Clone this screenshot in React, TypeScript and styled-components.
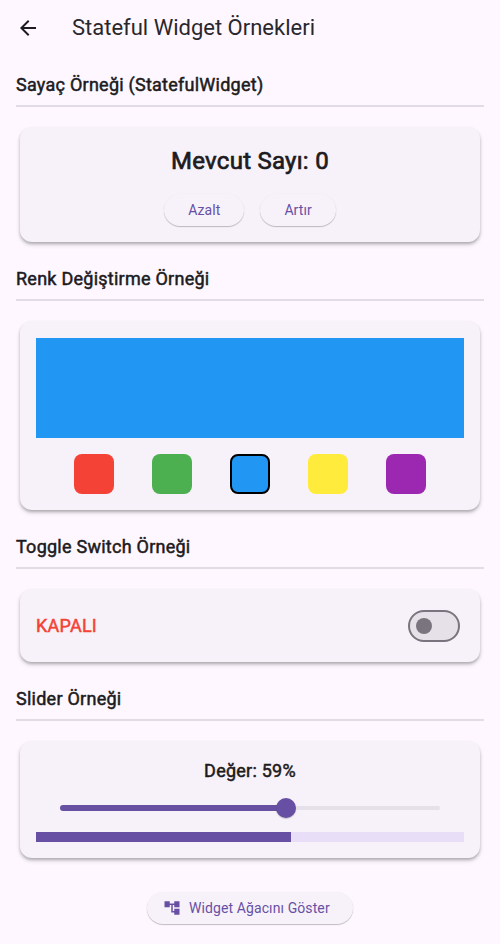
import React, { useState } from 'react';
import styled, { createGlobalStyle } from 'styled-components';

const GlobalStyle = createGlobalStyle`
  * { box-sizing: border-box; }
  body {
    margin: 0;
    background: #fef7ff;
    color: #1d1b20;
    font-family: Roboto, sans-serif;
  }
  button { font-family: inherit; cursor: pointer; }
`;

const Page = styled.div`
  height: 944px;
  display: flex;
  flex-direction: column;
  overflow: hidden;
`;

const AppBar = styled.header`
  height: 56px;
  flex: none;
  display: flex;
  align-items: center;
  padding-left: 16px;
  gap: 32px;
`;

const BackButton = styled.button`
  display: flex;
  padding: 0;
  border: 0;
  background: none;
  color: #1d1b20;
`;

const AppTitle = styled.h1`
  margin: 0;
  color: #29272c;
  font-size: 22px;
  line-height: 28px;
  font-weight: 400;
`;

const Content = styled.main`
  display: flex;
  flex-direction: column;
  padding: 16px;
`;

const SectionTitle = styled.h2`
  margin: 0;
  font-size: 18px;
  line-height: 26px;
  font-weight: 400;
  letter-spacing: 0.25px;
  -webkit-text-stroke: 0.5px currentColor;
`;

const Divider = styled.hr`
  width: 100%;
  height: 2px;
  margin: 7px 0 20px;
  border: 0;
  background: #e2dce6;
`;

const Card = styled.section<{ $height: number }>`
  height: ${(p) => p.$height}px;
  margin: 0 4px 24px;
  padding: 17px 16px 16px;
  border-radius: 12px;
  background: #f7f2fa;
  box-shadow: 0 2px 3px rgba(0, 0, 0, 0.24), 0 3px 5px rgba(0, 0, 0, 0.1);
`;

const CounterText = styled.p`
  margin: 0 0 16px;
  font-size: 24px;
  line-height: 34px;
  font-weight: 400;
  letter-spacing: 0.25px;
  -webkit-text-stroke: 0.7px currentColor;
  text-align: center;
`;

const ButtonRow = styled.div`
  display: flex;
  justify-content: center;
  gap: 16px;
`;

const PillButton = styled.button<{ $width: number; $icon?: boolean }>`
  width: ${(p) => p.$width}px;
  height: 32px;
  display: flex;
  align-items: center;
  justify-content: ${(p) => (p.$icon ? 'flex-start' : 'center')};
  gap: 8px;
  padding: 0 0 0 ${(p) => (p.$icon ? 16 : 0)}px;
  border: 0;
  border-radius: 16px;
  background: #f7f2fa;
  color: #6750a4;
  font-size: 14px;
  font-weight: 400;
  letter-spacing: 0.1px;
  white-space: nowrap;
  box-shadow: 0 1px 1px rgba(0, 0, 0, 0.2), 0 0.5px 1.5px rgba(0, 0, 0, 0.08);
`;

const ColorPreview = styled.div<{ $color: string }>`
  height: 100px;
  background: ${(p) => p.$color};
`;

const Swatches = styled.div`
  display: flex;
  justify-content: space-evenly;
  margin-top: 16px;
`;

const Swatch = styled.button<{ $color: string; $selected: boolean }>`
  width: 40px;
  height: 40px;
  padding: 0;
  border: 2px solid ${(p) => (p.$selected ? '#000' : 'transparent')};
  border-radius: 8px;
  background: ${(p) => p.$color} border-box;
`;

const ToggleRow = styled.div`
  height: 40px;
  display: flex;
  align-items: center;
  justify-content: space-between;
  padding-right: 4px;
`;

const ToggleLabel = styled.span<{ $on: boolean }>`
  padding-bottom: 2px;
  color: ${(p) => (p.$on ? '#4caf50' : '#f44336')};
  font-size: 18px;
  letter-spacing: 0.25px;
  -webkit-text-stroke: 0.5px currentColor;
`;

const SwitchTrack = styled.button<{ $on: boolean }>`
  width: 52px;
  height: 32px;
  display: flex;
  align-items: center;
  justify-content: ${(p) => (p.$on ? 'flex-end' : 'flex-start')};
  padding: 0 6px;
  border: 2px solid #79747e;
  border-radius: 16px;
  background: #e6e0e9;
`;

const SwitchThumb = styled.span`
  width: 16px;
  height: 16px;
  border-radius: 50%;
  background: #79747e;
`;

const ValueText = styled.p`
  margin: 0;
  font-size: 18px;
  line-height: 26px;
  letter-spacing: 0.25px;
  -webkit-text-stroke: 0.5px currentColor;
  text-align: center;
`;

const SliderTrack = styled.div`
  height: 20px;
  display: flex;
  align-items: center;
  margin: 14px 24px 14px;
`;

const SliderFilled = styled.div`
  height: 6px;
  border-radius: 3px 0 0 3px;
  background: #6750a4;
`;

const SliderThumb = styled.div`
  width: 20px;
  height: 20px;
  flex: none;
  margin: 0 -10px;
  border-radius: 50%;
  background: #6750a4;
  box-shadow: 0 1px 1px rgba(0, 0, 0, 0.2);
  z-index: 1;
`;

const SliderRest = styled.div`
  height: 4px;
  flex: 1;
  border-radius: 0 2px 2px 0;
  background: #e6e0e9;
`;

const Progress = styled.div`
  height: 10px;
  background: #e8def8;
`;

const ProgressFill = styled.div`
  height: 100%;
  background: #6750a4;
`;

const Footer = styled.footer`
  display: flex;
  justify-content: center;
  margin-top: 10px;
`;

const COLORS = ['#f44336', '#4caf50', '#2196f3', '#ffeb3b', '#9c27b0'];

export default function App() {
  const [count, setCount] = useState(0);
  const [color, setColor] = useState(COLORS[2]);
  const [on, setOn] = useState(false);
  const value = 59.48;

  return (
    <Page>
      <GlobalStyle />
      <AppBar>
        <BackButton aria-label="Geri">
          <svg width="24" height="24" viewBox="0 0 24 24" fill="currentColor">
            <path d="M20 11H7.83l5.59-5.59L12 4l-8 8 8 8 1.41-1.41L7.83 13H20v-2z" />
          </svg>
        </BackButton>
        <AppTitle>Stateful Widget Örnekleri</AppTitle>
      </AppBar>
      <Content>
        <SectionTitle>Sayaç Örneği (StatefulWidget)</SectionTitle>
        <Divider />
        <Card $height={115}>
          <CounterText>Mevcut Sayı: {count}</CounterText>
          <ButtonRow>
            <PillButton $width={80.3} onClick={() => setCount(count - 1)}>Azalt</PillButton>
            <PillButton $width={75.4} onClick={() => setCount(count + 1)}>Artır</PillButton>
          </ButtonRow>
        </Card>
        <SectionTitle>Renk Değiştirme Örneği</SectionTitle>
        <Divider />
        <Card $height={189}>
          <ColorPreview $color={color} />
          <Swatches>
            {COLORS.map((c) => (
              <Swatch key={c} $color={c} $selected={c === color} onClick={() => setColor(c)} />
            ))}
          </Swatches>
        </Card>
        <SectionTitle>Toggle Switch Örneği</SectionTitle>
        <Divider />
        <Card $height={73}>
          <ToggleRow>
            <ToggleLabel $on={on}>{on ? 'AÇIK' : 'KAPALI'}</ToggleLabel>
            <SwitchTrack $on={on} onClick={() => setOn(!on)}>
              <SwitchThumb />
            </SwitchTrack>
          </ToggleRow>
        </Card>
        <SectionTitle>Slider Örneği</SectionTitle>
        <Divider />
        <Card $height={117}>
          <ValueText>Değer: {Math.round(value)}%</ValueText>
          <SliderTrack>
            <SliderFilled style={{ width: `${value}%` }} />
            <SliderThumb />
            <SliderRest />
          </SliderTrack>
          <Progress>
            <ProgressFill style={{ width: `${value}%` }} />
          </Progress>
        </Card>
        <Footer>
          <PillButton $width={206} $icon>
            <svg width="18" height="18" viewBox="0 0 24 24" fill="currentColor">
              <path d="M22 11V3h-7v3H9V3H2v8h7V8h2v10h4v3h7v-8h-7v3h-2V8h2v3z" />
            </svg>
            Widget Ağacını Göster
          </PillButton>
        </Footer>
      </Content>
    </Page>
  );
}
